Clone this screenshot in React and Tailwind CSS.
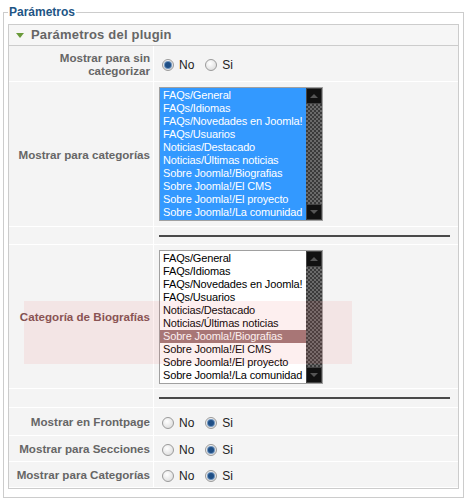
import React from 'react';

const cats = [
  'FAQs/General',
  'FAQs/Idiomas',
  'FAQs/Novedades en Joomla!',
  'FAQs/Usuarios',
  'Noticias/Destacado',
  'Noticias/Últimas noticias',
  'Sobre Joomla!/Biografias',
  'Sobre Joomla!/El CMS',
  'Sobre Joomla!/El proyecto',
  'Sobre Joomla!/La comunidad',
];

function Radio({ checked, label }) {
  return (
    <span className="flex items-center mr-[11px]">
      <span className="w-[12px] h-[12px] rounded-full border border-[#9a9a9a] bg-[radial-gradient(circle_at_40%_35%,#ffffff,#d6d6d6)] flex items-center justify-center">
        {checked && <span className="w-[6px] h-[6px] rounded-full bg-[#1f4f86] ring-1 ring-[#6d93bd]" />}
      </span>
      <span className="ml-[5px] text-[12px] text-[#222]">{label}</span>
    </span>
  );
}

function Radios({ yes }) {
  return (
    <div className="flex items-center pl-[3px] pt-[2px]">
      <Radio checked={!yes} label="No" />
      <Radio checked={yes} label="Si" />
    </div>
  );
}

function Scrollbar() {
  return (
    <div className="w-[16px] flex flex-col bg-[repeating-conic-gradient(#3a3a3a_0_25%,#6a6a6a_0_50%)] bg-[length:4px_4px]">
      <div className="h-[16px] bg-[#111] border border-[#444] flex items-center justify-center">
        <span className="w-0 h-0 border-l-[4px] border-r-[4px] border-b-[4px] border-l-transparent border-r-transparent border-b-[#555]" />
      </div>
      <div className="flex-1" />
      <div className="h-[16px] bg-[#111] border border-[#444] flex items-center justify-center">
        <span className="w-0 h-0 border-l-[4px] border-r-[4px] border-t-[4px] border-l-transparent border-r-transparent border-t-[#555]" />
      </div>
    </div>
  );
}

function ListBox({ allSelected, selected }) {
  return (
    <div className="flex w-[164px] h-[134px] border border-[#a0a0a0] bg-white">
      <div className={'flex-1 pt-[1px] ' + (allSelected ? 'bg-[#3399ff]' : '')}>
        {cats.map((c) => (
          <div
            key={c}
            className={
              'h-[13px] leading-[13px] pl-[3px] text-[11px] tracking-[-0.15px] whitespace-nowrap ' +
              (allSelected ? 'text-white' : c === selected ? 'bg-[#a07878] text-white' : 'text-black')
            }
          >
            {c}
          </div>
        ))}
      </div>
      <Scrollbar />
    </div>
  );
}

function Row({ label, h, children, labelClass = 'text-[#666]' }) {
  return (
    <div className={'flex border-b border-white ' + h}>
      <div className={'w-[145px] shrink-0 border-r border-white flex items-center justify-end text-right pr-[3px] text-[11.6px] font-bold leading-[13px] ' + labelClass}>
        {label}
      </div>
      <div className="flex-1 flex items-center pl-[5px]">{children}</div>
    </div>
  );
}

function Divider() {
  return <div className="w-full mr-[8px] border-t-2 border-[#4a4a4a]" />;
}

export default function App() {
  return (
    <div className="w-[467px] h-[503px] bg-white font-['Liberation_Sans',Arial,sans-serif] pt-[4px]">
      <fieldset className="mx-[3px] border border-[#cccccc] px-[4px] pb-[8px]">
        <legend className="px-[1px] text-[12px] font-bold leading-[16px] text-[#1e5585]">Parámetros</legend>
        <div className="relative mt-[4px] border border-[#cccccc] bg-[#f4f4f4]">
          <div className="h-[21px] flex items-center border-b border-[#cccccc] bg-[#f6f6f6] pl-[7px]">
            <span className="w-0 h-0 border-l-[4px] border-r-[4px] border-t-[5px] border-l-transparent border-r-transparent border-t-[#6a9a3a] mr-[7px]" />
            <span className="text-[13px] font-bold text-[#666] tracking-[0.2px]">Parámetros del plugin</span>
          </div>
          <Row label={<>Mostrar para sin<br />categorizar</>} h="h-[36px]">
            <Radios yes={false} />
          </Row>
          <Row label="Mostrar para categorías" h="h-[145px]">
            <ListBox allSelected />
          </Row>
          <Row label="" h="h-[18px]">
            <Divider />
          </Row>
          <Row label="Categoría de Biografías" h="h-[144px]" labelClass="text-[#7d5050]">
            <ListBox selected="Sobre Joomla!/Biografias" />
          </Row>
          <Row label="" h="h-[19px]">
            <Divider />
          </Row>
          <Row label="Mostrar en Frontpage" h="h-[28px]">
            <Radios yes />
          </Row>
          <Row label="Mostrar para Secciones" h="h-[26px]">
            <Radios yes />
          </Row>
          <Row label="Mostrar para Categorías" h="h-[26px]">
            <Radios yes />
          </Row>
          <div className="absolute left-[15px] top-[276px] w-[328px] h-[63px] bg-[rgba(235,110,110,0.11)] pointer-events-none" />
        </div>
      </fieldset>
    </div>
  );
}
